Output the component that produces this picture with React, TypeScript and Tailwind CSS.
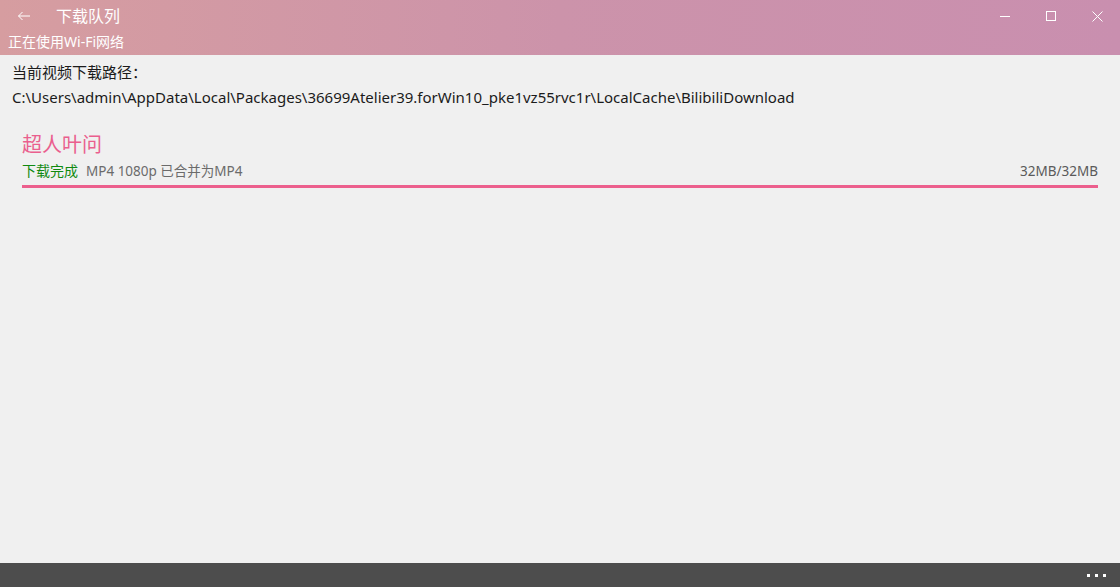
const font = { fontFamily: '"Noto Sans", "Noto Sans CJK SC", sans-serif' };

export default function App() {
  return (
    <div
      className="flex h-[587px] w-[1120px] flex-col overflow-hidden bg-[#f0f0f0]"
      style={font}
    >
      {/* title bar */}
      <header className="flex h-[55px] shrink-0 flex-col bg-gradient-to-r from-[#d69da0] via-[#cc93aa] to-[#c98faf] text-white">
        <div className="flex h-[32px] items-center">
          <svg width="14" height="10" viewBox="0 0 14 10" className="ml-[17px]" fill="none" stroke="white" strokeWidth="1">
            <path d="M13 5H1.5M5.5 1L1.5 5l4 4" />
          </svg>
          <span className="ml-[25px] text-[16px] leading-none">下载队列</span>
          <div className="ml-auto flex h-full">
            <button className="flex w-[46px] items-center justify-center">
              <svg width="10" height="10" viewBox="0 0 10 10" stroke="white" strokeWidth="1">
                <path d="M0 5.5h10" />
              </svg>
            </button>
            <button className="flex w-[46px] items-center justify-center">
              <svg width="10" height="10" viewBox="0 0 10 10" fill="none" stroke="white" strokeWidth="1">
                <rect x="0.5" y="0.5" width="9" height="9" />
              </svg>
            </button>
            <button className="flex w-[46px] items-center justify-center">
              <svg width="11" height="11" viewBox="0 0 11 11" stroke="white" strokeWidth="1">
                <path d="M0.5 0.5l10 10M10.5 0.5l-10 10" />
              </svg>
            </button>
          </div>
        </div>
        <div className="pl-[8px] text-[14px] leading-[20px]">正在使用Wi-Fi网络</div>
      </header>

      {/* content */}
      <main className="flex flex-1 flex-col px-[12px] pt-[7px]">
        <p className="text-[15px] leading-[20px] text-[#1b1b1b]">当前视频下载路径：</p>
        <p className="mt-[5px] text-[15px] leading-[20px] text-[#1b1b1b]">
          C:\Users\admin\AppData\Local\Packages\36699Atelier39.forWin10_pke1vz55rvc1r\LocalCache\BilibiliDownload
        </p>

        <div className="mx-[10px] mt-[24px] flex flex-col">
          <div className="text-[20px] leading-[28px] text-[#ea5f8e]">超人叶问</div>
          <div className="mt-[3px] flex items-center text-[14px] leading-[18px]">
            <span className="text-[#108a10]">下载完成</span>
            <span className="ml-[8px] text-[13.5px] text-[#6b6b6b]">MP4 1080p 已合并为MP4</span>
            <span className="ml-auto text-[13.5px] text-[#5a5a5a]">32MB/32MB</span>
          </div>
          <div className="mt-[5px] h-[3px] w-full bg-[#ec5f8d]" />
        </div>
      </main>

      {/* app bar */}
      <footer className="flex h-[24px] shrink-0 items-center justify-end bg-[#4d4d4d] pr-[14px]">
        <div className="flex gap-[5px]">
          <span className="h-[3px] w-[3px] bg-white" />
          <span className="h-[3px] w-[3px] bg-white" />
          <span className="h-[3px] w-[3px] bg-white" />
        </div>
      </footer>
    </div>
  );
}
